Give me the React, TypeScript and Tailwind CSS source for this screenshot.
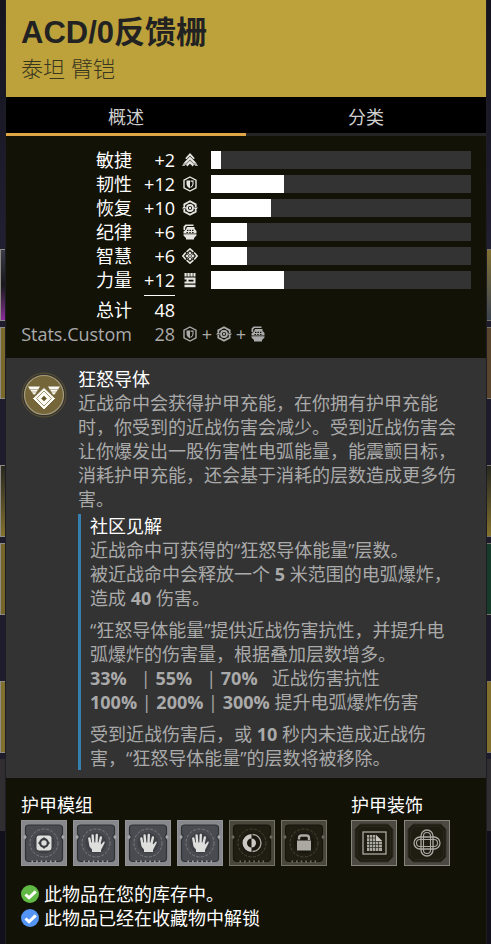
import { useState, type ReactNode } from "react";

const NOTCHED_PLATE =
  "M8 5H38Q41.500 5 41.500 8V14Q38.500 17 41.500 20V38Q41.500 41.500 38 41.500H8Q4.500 41.500 4.500 38V20Q7.500 17 4.500 14V8Q4.500 5 8 5Z";

type IconProps = { className?: string };

function MobilityIcon({ className = "size-4" }: IconProps) {
  return (
    <svg viewBox="0 0 16 16" className={className} fill="currentColor" aria-hidden="true">
      <path d="M8 1 12.800 6.300 11.400 7.200 8 3.700 4.600 7.200 3.200 6.300Z" />
      <path d="M8 4.800 14.200 10.800 16 14H13.500L8 8 2.500 14H0L1.800 10.800Z" fillOpacity=".75" />
      <path d="M8 4.800 13.800 10.500 12 11 8 7.200 4 11 2.200 10.500Z" />
      <path d="M8 8.500 12 12.500 10.800 14.500 8 11.700 5.200 14.500 4 12.500Z" />
    </svg>
  );
}

function ResilienceIcon({ className = "size-4" }: IconProps) {
  return (
    <svg viewBox="0 0 16 16" className={className} fill="currentColor" aria-hidden="true">
      <path d="M8 1 14 4.200V11.800L8 15 2 11.800V4.200Z" fill="none" stroke="currentColor" strokeWidth="1.400" />
      <path d="M4.500 4.600H8V12.400Q4.500 10.900 4.500 8Z" />
      <path d="M8.500 5.100H11V8Q11 10.300 8.500 11.600" fill="none" stroke="currentColor" strokeWidth="1.100" />
    </svg>
  );
}

function RecoveryIcon({ className = "size-4" }: IconProps) {
  return (
    <svg viewBox="0 0 16 16" className={className} fill="currentColor" aria-hidden="true">
      <path d="M2.300 6V4.400L8 1.200 13.700 4.400V7M13.700 10V11.600L8 14.800 2.300 11.600V9" fill="none" stroke="currentColor" strokeWidth="1.800" />
      <circle cx="8" cy="8" r="3" fill="none" stroke="currentColor" strokeWidth="1.800" />
      <circle cx="8" cy="8" r="1.200" />
      <path d="M0 8.500 2.300 5.500 4.600 8.500ZM16 7.500 13.700 10.500 11.400 7.500Z" />
    </svg>
  );
}

function DisciplineIcon({ className = "size-4" }: IconProps) {
  return (
    <svg viewBox="0 0 16 16" className={className} fill="currentColor" aria-hidden="true">
      <path d="M1.500 6V2.500L3.500 .500H11.500V2H4.500L3.200 3.500V6Z" />
      <path
        fillRule="evenodd"
        d="M5 3H12.500V4.800L14.500 7V9.500H1.500V7.500L4 5.500ZM5 7H6.400V5.800H5ZM7.500 7H8.900V5.800H7.500ZM10 7H11.400V5.800H10ZM4.500 9H5.900V7.900H4.500ZM7.300 9H8.700V7.900H7.300ZM10.100 9H11.500V7.900H10.100Z"
      />
      <path d="M1.500 10.200H14.500V11.500L12 14V15.500H4V14L1.500 11.500Z" />
    </svg>
  );
}

function IntellectIcon({ className = "size-4" }: IconProps) {
  return (
    <svg viewBox="0 0 16 16" className={className} fill="currentColor" aria-hidden="true">
      <path d="M4.600 3.800 8 .900 11.400 3.800M12.200 4.600 15.100 8 12.200 11.400M11.400 12.200 8 15.100 4.600 12.200M3.800 11.400 .900 8 3.800 4.600" fill="none" stroke="currentColor" strokeWidth="1.600" />
      <path d="M8 3.400 9.700 5.100 8 7 6.300 5.100ZM8 9 9.700 10.900 8 12.600 6.300 10.900ZM3.400 8 5.100 6.300 7 8 5.100 9.700ZM9 8 10.900 6.300 12.600 8 10.900 9.700Z" />
      <path d="M5.400 5.400 10.600 10.600M10.600 5.400 5.400 10.600" stroke="currentColor" strokeWidth=".8" />
    </svg>
  );
}

function StrengthIcon({ className = "size-4" }: IconProps) {
  return (
    <svg viewBox="0 0 16 16" className={className} fill="currentColor" aria-hidden="true">
      <path d="M2.500 1H4.700V4.500H2.500ZM5.400 1H7.700V4.500H5.400ZM8.400 1H10.700V4.500H8.400ZM11.400 1H13.500V4.500H11.400Z" />
      <path fillRule="evenodd" d="M2.500 5.500H13.500V11.500H2.500V9.500H4.500V7.500H2.500ZM6.500 7.800V9.500H11.500V7.800Z" />
      <path d="M2.500 12.700H13.500V15.200H2.500Z" />
    </svg>
  );
}

function PerkIcon() {
  return (
    <svg viewBox="0 0 46 46" className="size-[46px] shrink-0" aria-hidden="true">
      <circle cx="23" cy="23" r="22" fill="#35342f" stroke="#5c5233" strokeWidth="1" />
      <circle cx="23" cy="23" r="19.500" fill="#75663a" stroke="#a59b7b" strokeWidth="1.200" />
      <path d="M7 14.500H19L14 22.500H12.500ZM39 14.500H27L32 22.500H33.500Z" fill="#fbfaf5" />
      <path d="M8 17.500H18M38 17.500H28M10.500 20H16M35.500 20H30" stroke="#a29670" strokeWidth=".7" />
      <path d="M23 15.500 34.500 26.500 23 38 11.500 26.500Z" fill="#fbfaf5" stroke="#75663a" strokeWidth="1" />
      <path d="M23 19 30.500 26.500 23 34 15.500 26.500Z" fill="none" stroke="#a29670" strokeWidth="1" />
      <path d="M23 24 25.500 26.500 23 29 20.500 26.500Z" fill="#655730" stroke="#8b7e55" strokeWidth="1" />
    </svg>
  );
}

function HandGlyph() {
  return (
    <g>
      <path d="M17.300 24 16.300 18.500M20.200 23 19.600 15.500M23.500 23 23.800 15M26.300 24 27.900 17.500" stroke="#dededc" strokeWidth="2.400" strokeLinecap="round" />
      <path d="M16.100 22.500H27L28.200 24.500 30.500 21.700Q32.200 21 31.600 23L28 30V32H19V29.500L16.500 26.500Z" fill="#dededc" />
    </g>
  );
}

function SocketGlyph() {
  return (
    <g>
      <rect x="15.500" y="15.500" width="15" height="15" rx="3" fill="#dededc" />
      <circle cx="23" cy="23" r="3.800" fill="none" stroke="#3b3c40" strokeWidth="2.200" />
      <path d="M23 17.500V19M23 27V28.500M17.500 23H19M27 23H28.500" stroke="#3b3c40" strokeWidth="1.800" />
    </g>
  );
}

function HalfGlyph() {
  return (
    <g>
      <path d="M22.500 14A9 9 0 0 0 22.500 32V27.500A4.500 4.500 0 0 1 22.500 18.500Z" fill="#cac9c3" />
      <path d="M23.500 14.500A8.500 8.500 0 0 1 23.500 31.500" fill="none" stroke="#aaa9a1" strokeWidth="1.400" />
      <path d="M22.500 18.500A4.500 4.500 0 0 1 22.500 27.500Z" fill="#cac9c3" />
    </g>
  );
}

function LockGlyph() {
  return (
    <g>
      <path d="M18 19.500V18Q18 15.500 20.500 15.500H25.500Q28 15.500 28 18V20" fill="none" stroke="#aaa9a2" strokeWidth="2.400" />
      <rect x="16" y="20.500" width="14" height="10" fill="#aaa9a2" />
    </g>
  );
}

function ModSlot({ label, locked = false, children }: { label: string; locked?: boolean; children: ReactNode }) {
  return (
    <button type="button" aria-label={label} className="size-[46px] shrink-0">
      <svg viewBox="0 0 46 46" className="block size-full" aria-hidden="true">
        <rect x=".5" y=".5" width="45" height="45" fill={locked ? "#49463b" : "#87888c"} stroke={locked ? "#747369" : "#939398"} />
        <path d={NOTCHED_PLATE} fill={locked ? "#201e13" : "#494b51"} stroke={locked ? "#17150c" : "#303238"} strokeWidth="1.200" />
        <circle cx="4" cy="17" r="1.500" fill={locked ? "#6b695f" : "#a6a6aa"} />
        <circle cx="42" cy="17" r="1.500" fill={locked ? "#6b695f" : "#a6a6aa"} />
        <circle cx="23" cy="23" r="10.500" fill={locked ? "#19170e" : "#3e4045"} />
        <circle cx="23" cy="23" r="14" fill="none" stroke={locked ? "#504e40" : "#85878b"} strokeWidth=".8" strokeDasharray="3 1.500" />
        <path d="M10.500 41.500H35.500" stroke={locked ? "#747267" : "#a2a3a7"} strokeWidth="2" strokeDasharray="1.600 3" />
        {children}
      </svg>
    </button>
  );
}

function CosmeticSlot({ label, children }: { label: string; children: ReactNode }) {
  return (
    <button type="button" aria-label={label} className="size-[46px] shrink-0">
      <svg viewBox="0 0 46 46" className="block size-full" fill="none" aria-hidden="true">
        <rect x=".5" y=".5" width="45" height="45" fill="#4b4941" stroke="#86857e" />
        <path d="M9 4H37L42 9V37L37 42H9L4 37V9Z" fill="#1f1d12" stroke="#353328" />
        <path d="M10.500 6.500H35.500L39.500 10.500V35.500L35.500 39.500H10.500L6.500 35.500V10.500Z" stroke="#2b291e" strokeWidth=".8" />
        {children}
      </svg>
    </button>
  );
}

const stats = [
  { name: "敏捷", value: 2, width: "4%", Icon: MobilityIcon },
  { name: "韧性", value: 12, width: "28%", Icon: ResilienceIcon },
  { name: "恢复", value: 10, width: "23%", Icon: RecoveryIcon },
  { name: "纪律", value: 6, width: "14%", Icon: DisciplineIcon },
  { name: "智慧", value: 6, width: "14%", Icon: IntellectIcon },
  { name: "力量", value: 12, width: "28%", Icon: StrengthIcon },
];

function InventoryEdge({ side }: { side: "left" | "right" }) {
  const left = side === "left";
  const edge = left ? "border-r border-[#1e1d24]" : "border-l border-[#1e1d24]";
  const tile = left ? "h-[72px] border-y border-l border-[#8f8c85]" : "h-[72px] border-y border-[#77736b]";
  return (
    <div aria-hidden="true" className={`flex shrink-0 flex-col bg-[#1e1c2c] ${left ? "w-1.5" : "w-[5px]"} ${edge}`}>
      <div className="h-[249px] bg-linear-to-b from-[#15141e] to-[#211f32]" />
      <div className="flex flex-col gap-[6px]">
        <div className={`${tile} bg-linear-to-b ${left ? "from-[#3c3c49] via-[#18171b] to-[#8c299b]" : "from-[#81702f] to-[#3c434d]"}`} />
        <div className={`${tile} ${left ? "bg-[#79682a]" : "bg-[#59452d]"}`} />
      </div>
      <div className="mt-[66px] flex flex-col gap-[6px]">
        <div className={`${tile} bg-linear-to-b from-[#28291f] to-[#83712c]`} />
        <div className={`${tile} ${left ? "bg-[#766528]" : "bg-[#173b2b]"}`} />
      </div>
      <div className="mt-[66px] flex flex-col gap-[6px]">
        <div className={`${tile} bg-[#81702d]`} />
        <div className="h-[72px] bg-[#302e31]" />
      </div>
      <div className="flex-1 bg-[#11101b]" />
    </div>
  );
}

function StatusLine({ color, children }: { color: string; children: ReactNode }) {
  return (
    <p className="flex items-center gap-[5px]">
      <svg viewBox="0 0 18 18" className="size-[18px] shrink-0" aria-hidden="true">
        <circle cx="9" cy="9" r="9" fill={color} />
        <path d="M4.500 9.500 8 12.800 14.800 6.300" fill="none" stroke="#fff" strokeWidth="3" />
      </svg>
      {children}
    </p>
  );
}

export default function App() {
  const [tab, setTab] = useState("概述");

  return (
    <div lang="zh-CN" className="flex min-h-screen w-full bg-[#131207] font-['Open_Sans','Noto_Sans_CJK_SC',sans-serif] text-lg/6 text-white">
      <InventoryEdge side="left" />
      <main className="min-w-0 flex-1 bg-[#131207]">
        <header className="bg-[#bda23b] px-[15px] pt-[13px] pb-[13px] font-['Liberation_Sans','Noto_Sans_CJK_SC',sans-serif] text-[#222]">
          <h1 className="text-[31px]/[40px] font-bold">ACD/0反馈栅</h1>
          <p className="mt-[3px] text-[22px]/[28px] font-light text-[#39361f]">泰坦 臂铠</p>
        </header>

        <nav className="flex bg-black text-[#d0d0d0]" role="tablist">
          {["概述", "分类"].map((name) => (
            <button
              key={name}
              type="button"
              role="tab"
              aria-selected={tab === name}
              onClick={() => setTab(name)}
              className={`flex-1 border-b-3 pt-2 pb-1 ${tab === name ? "border-[#dda545]" : "border-[#242424]"}`}
            >
              {name}
            </button>
          ))}
        </nav>

        <section className="px-[15px] py-3">
          {stats.map(({ name, value, width, Icon }) => (
            <div key={name} className="flex items-center">
              <span className="w-[111px] text-right">{name}</span>
              <span className="w-[43px] text-right">+{value}</span>
              <span className="w-9 pl-[7px] text-[#e6e6e2]">
                <Icon />
              </span>
              <div className="h-[18px] flex-1 bg-[#333]">
                <div className="h-full bg-white" style={{ width }} />
              </div>
            </div>
          ))}
          <div className="mt-[3px] flex">
            <span className="w-[111px] pt-[3px] text-right">总计</span>
            <span className="ml-3 w-[31px] border-t border-white pt-[2px] text-right">48</span>
          </div>
          <div className="flex items-center text-[#aaa]">
            <span className="w-[111px] text-right">Stats.Custom</span>
            <span className="w-[43px] text-right">28</span>
            <span className="flex items-center pl-[7px]">
              <ResilienceIcon />
              <span className="w-[18px] text-center">+</span>
              <RecoveryIcon />
              <span className="w-[18px] text-center">+</span>
              <DisciplineIcon />
            </span>
          </div>
        </section>

        <section className="flex gap-[11px] bg-[#333] px-[15px] pt-[9px] pb-2 text-[#aaa]">
          <div className="pt-[5px]">
            <PerkIcon />
          </div>
          <div className="min-w-0 flex-1">
            <h2 className="text-white">狂怒导体</h2>
            <p>
              近战命中会获得护甲充能，在你拥有护甲充能时，你受到的近战伤害会减少。受到近战伤害会让你爆发出一股伤害性电弧能量，能震颤目标，消耗护甲充能，还会基于消耗的层数造成更多伤害。
            </p>
            <div className="mt-[3px] flex flex-col gap-2 border-l-3 border-[#3580ae] pl-[9px]">
              <div>
                <h3 className="text-white">社区见解</h3>
                <p>
                  近战命中可获得的“狂怒导体能量”层数。
                  <br />
                  被近战命中会释放一个 <b>5</b> 米范围的电弧爆炸，
                  <br />
                  造成 <b>40</b> 伤害。
                </p>
              </div>
              <p>
                “狂怒导体能量”提供近战伤害抗性，并提升电
                <br />
                弧爆炸的伤害量，根据叠加层数增多。
                <br />
                <b>33%</b>&nbsp;&nbsp; | <b>55%</b>&nbsp;&nbsp; | <b>70%</b>&nbsp;&nbsp; 近战伤害抗性
                <br />
                <b>100%</b> | <b>200%</b> | <b>300%</b> 提升电弧爆炸伤害
              </p>
              <p>
                受到近战伤害后，或 <b>10</b> 秒内未造成近战伤
                <br />
                害，“狂怒导体能量”的层数将被移除。
              </p>
            </div>
          </div>
        </section>

        <section className="px-[15px] pt-[15px] pb-3">
          <div className="flex flex-wrap gap-6">
            <div>
              <h2>护甲模组</h2>
              <div className="mt-[3px] flex gap-[6px]">
                <ModSlot label="通用模组"><SocketGlyph /></ModSlot>
                <ModSlot label="臂铠模组一"><HandGlyph /></ModSlot>
                <ModSlot label="臂铠模组二"><HandGlyph /></ModSlot>
                <ModSlot label="臂铠模组三"><HandGlyph /></ModSlot>
                <ModSlot label="调谐模组" locked><HalfGlyph /></ModSlot>
                <ModSlot label="已锁定模组" locked><LockGlyph /></ModSlot>
              </div>
            </div>
            <div>
              <h2>护甲装饰</h2>
              <div className="mt-[3px] flex gap-[7px]">
                <CosmeticSlot label="着色器">
                  <rect x="12" y="12" width="23" height="22" stroke="#aaa9a2" strokeWidth="1.300" />
                  <path d="M16 15H25L31 21V31H16Z" fill="#aaa9a2" />
                  <path d="M18.500 15V31M21.500 15V31M24.500 15V31M27.500 18V31M16 18H28M16 21.500H31M16 24.500H31M16 27.500H31" stroke="#2b291e" strokeWidth=".7" />
                  <path d="M25 15V21H31Z" fill="#cac8c0" />
                </CosmeticSlot>
                <CosmeticSlot label="装饰">
                  <rect x="17" y="10" width="12" height="26" rx="6" stroke="#aaa9a2" strokeWidth="1.300" />
                  <rect x="10" y="17" width="26" height="12" rx="6" stroke="#aaa9a2" strokeWidth="1.300" />
                  <rect x="19.500" y="12.500" width="7" height="21" rx="3.500" stroke="#aaa9a2" strokeWidth="1.100" />
                  <rect x="12.500" y="19.500" width="21" height="7" rx="3.500" stroke="#aaa9a2" strokeWidth="1.100" />
                </CosmeticSlot>
              </div>
            </div>
          </div>
          <div className="mt-4">
            <StatusLine color="#60b845">此物品在您的库存中。</StatusLine>
            <StatusLine color="#5394f4">此物品已经在收藏物中解锁</StatusLine>
          </div>
        </section>
      </main>
      <InventoryEdge side="right" />
    </div>
  );
}
